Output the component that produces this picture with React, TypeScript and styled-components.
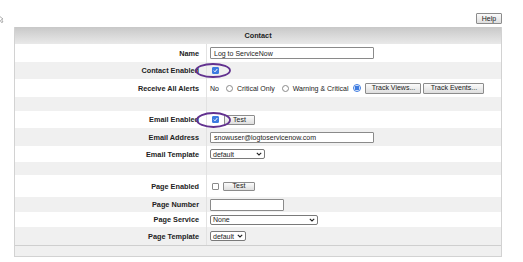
import React from "react";
import styled, { createGlobalStyle } from "styled-components";

const Global = createGlobalStyle`
  html, body { margin: 0; padding: 0; background: #fff; }
  body {
    font-family: "Liberation Sans", Arial, sans-serif;
    font-size: 7.3px;
    color: #222;
  }
`;

const Page = styled.div`
  width: 523px;
  height: 262px;
  padding-top: 13px;
  box-sizing: border-box;
`;

const Toolbar = styled.div`
  width: 502px;
  height: 11px;
  display: flex;
  align-items: center;
  justify-content: space-between;
  margin-bottom: 3px;
`;

const Btn = styled.button<{ $w?: number; $h?: number }>`
  box-sizing: border-box;
  width: ${(p) => (p.$w ? `${p.$w}px` : "auto")};
  height: ${(p) => p.$h ?? 11}px;
  padding: 0 2px;
  margin: 0;
  border: 1px solid #8c8c8c;
  border-radius: 1px;
  background: linear-gradient(#fbfbfb, #dedede);
  font-family: "Liberation Sans", Arial, sans-serif;
  font-size: 7px;
  line-height: 8px;
  color: #222;
  display: flex;
  align-items: center;
  justify-content: center;
  white-space: nowrap;
  flex-shrink: 0;
`;

const Table = styled.div`
  margin-left: 14px;
  width: 488px;
  box-sizing: border-box;
  border: 1px solid #d2d2d2;
  border-top: none;
`;

const Header = styled.div`
  height: 17px;
  display: flex;
  align-items: center;
  justify-content: center;
  font-weight: bold;
  color: #222;
  background: linear-gradient(#c8c8c8, #e9e9e9);
`;

const Row = styled.div<{ $h: number; $alt: boolean }>`
  display: grid;
  grid-template-columns: 192px 1fr;
  height: ${(p) => p.$h}px;
  background: ${(p) => (p.$alt ? "#f0f0f0" : "#ffffff")};
`;

const Label = styled.div`
  display: flex;
  align-items: center;
  justify-content: flex-end;
  padding-right: 7px;
  font-weight: bold;
  color: #222;
  border-right: 1px solid #e2e2e2;
  white-space: nowrap;
`;

const Value = styled.div`
  display: flex;
  align-items: center;
  padding-left: 3px;
  white-space: nowrap;
  font-size: 7px;
  color: #222;
`;

const Footer = styled.div`
  height: 10px;
  background: #f0f0f0;
  border-top: 1px solid #cfcfcf;
`;

const TextInput = styled.div<{ $w: number; $h: number }>`
  box-sizing: border-box;
  width: ${(p) => p.$w}px;
  height: ${(p) => p.$h}px;
  border: 1px solid #8a8a8a;
  border-radius: 1px;
  background: #fff;
  padding: 0 3px;
  display: flex;
  align-items: center;
  color: #222;
`;

const SelectBox = styled.div<{ $w: number }>`
  box-sizing: border-box;
  width: ${(p) => p.$w}px;
  height: 10px;
  border: 1px solid #7a7a7a;
  border-radius: 2px;
  background: #fff;
  padding: 0 2px 0 2px;
  display: flex;
  align-items: center;
  justify-content: space-between;
  color: #222;
`;

const CheckWrap = styled.span`
  position: relative;
  display: inline-flex;
  margin-left: 2px;
`;

const Check = styled.span<{ $on: boolean }>`
  box-sizing: border-box;
  width: 7px;
  height: 7px;
  border-radius: 1px;
  border: 1px solid ${(p) => (p.$on ? "#3d7be0" : "#8a8a8a")};
  background: ${(p) => (p.$on ? "#3d7be0" : "#fff")};
  display: flex;
  align-items: center;
  justify-content: center;
`;

const Ring = styled.svg<{ $l: number; $t: number; $w: number; $h: number }>`
  position: absolute;
  left: ${(p) => p.$l}px;
  top: ${(p) => p.$t}px;
  width: ${(p) => p.$w}px;
  height: ${(p) => p.$h}px;
  overflow: visible;
  pointer-events: none;
`;

const Radio = styled.span<{ $on?: boolean }>`
  box-sizing: border-box;
  width: ${(p) => (p.$on ? 8 : 7)}px;
  height: ${(p) => (p.$on ? 8 : 7)}px;
  border-radius: 50%;
  border: 1px solid ${(p) => (p.$on ? "#3d7be0" : "#8a8a8a")};
  background: ${(p) =>
    p.$on ? "radial-gradient(circle, #3d7be0 0 2.2px, #ffffff 2.6px)" : "#fff"};
  margin: 0 4px 0 ${(p) => (p.$on ? 5 : 7)}px;
  flex-shrink: 0;
`;

const Gap = styled.span<{ $w: number }>`
  display: inline-block;
  width: ${(p) => p.$w}px;
`;

const Chevron = () => (
  <svg width="6" height="4" viewBox="0 0 6 4">
    <path d="M0.8 0.8 L3 3 L5.2 0.8" fill="none" stroke="#222" strokeWidth="1.1" />
  </svg>
);

const Tick = () => (
  <svg width="5" height="5" viewBox="0 0 5 5">
    <path d="M0.8 2.6 L2 3.8 L4.3 1" fill="none" stroke="#fff" strokeWidth="1" />
  </svg>
);

const Annotated = ({ on, ring }: { on: boolean; ring?: { l: number; t: number; w: number; h: number } }) => (
  <CheckWrap>
    <Check $on={on}>{on && <Tick />}</Check>
    {ring && (
      <Ring $l={ring.l} $t={ring.t} $w={ring.w} $h={ring.h} viewBox={`0 0 ${ring.w} ${ring.h}`}>
        <ellipse
          cx={ring.w / 2}
          cy={ring.h / 2}
          rx={ring.w / 2 - 1}
          ry={ring.h / 2 - 1}
          fill="none"
          stroke="#62318f"
          strokeWidth="1.8"
        />
      </Ring>
    )}
  </CheckWrap>
);

const Cursor = () => (
  <svg width="5" height="9" viewBox="0 0 5 9">
    <path d="M-2 1 L3 5 L1.5 5.5 L3 8 L1.5 8.5 L0 6 L-2 7.5 Z" fill="#fff" stroke="#9a9a9a" strokeWidth="0.8" />
  </svg>
);

type RowDef = { label: string; h: number; content?: React.ReactNode };

const rows: RowDef[] = [
  { label: "Name", h: 18, content: <TextInput $w={164} $h={12}>Log to ServiceNow</TextInput> },
  { label: "Contact Enabled", h: 17, content: <Annotated on ring={{ l: -17, t: -4, w: 36, h: 15 }} /> },
  {
    label: "Receive All Alerts",
    h: 18,
    content: (
      <>
        <span>No</span>
        <Radio />
        <span>Critical Only</span>
        <Radio $on={false} />
        <span>Warning &amp; Critical</span>
        <Radio $on />
        <Btn $w={56}>Track Views...</Btn>
        <Gap $w={2} />
        <Btn $w={61}>Track Events...</Btn>
      </>
    ),
  },
  { label: "", h: 14 },
  {
    label: "Email Enabled",
    h: 17,
    content: (
      <>
        <Annotated on ring={{ l: -16, t: -4, w: 35, h: 16 }} />
        <Gap $w={5} />
        <Btn $w={31} $h={10}>Test</Btn>
      </>
    ),
  },
  { label: "Email Address", h: 18, content: <TextInput $w={164} $h={11}>snowuser@logtoservicenow.com</TextInput> },
  { label: "Email Template", h: 16, content: <SelectBox $w={55}><span>default</span><Chevron /></SelectBox> },
  { label: "", h: 13 },
  {
    label: "Page Enabled",
    h: 22,
    content: (
      <>
        <Annotated on={false} />
        <Gap $w={4} />
        <Btn $w={32} $h={9}>Test</Btn>
      </>
    ),
  },
  { label: "Page Number", h: 15, content: <TextInput $w={74} $h={12} /> },
  { label: "Page Service", h: 15, content: <SelectBox $w={108}><span>None</span><Chevron /></SelectBox> },
  { label: "Page Template", h: 18, content: <SelectBox $w={36}><span>default</span><Chevron /></SelectBox> },
];

export default function App() {
  return (
    <Page>
      <Global />
      <Toolbar>
        <Cursor />
        <Btn $w={26}>Help</Btn>
      </Toolbar>
      <Table>
        <Header>Contact</Header>
        {rows.map((r, i) => (
          <Row key={i} $h={r.h} $alt={i % 2 === 1}>
            <Label>{r.label}</Label>
            <Value>{r.content}</Value>
          </Row>
        ))}
        <Footer />
      </Table>
    </Page>
  );
}
